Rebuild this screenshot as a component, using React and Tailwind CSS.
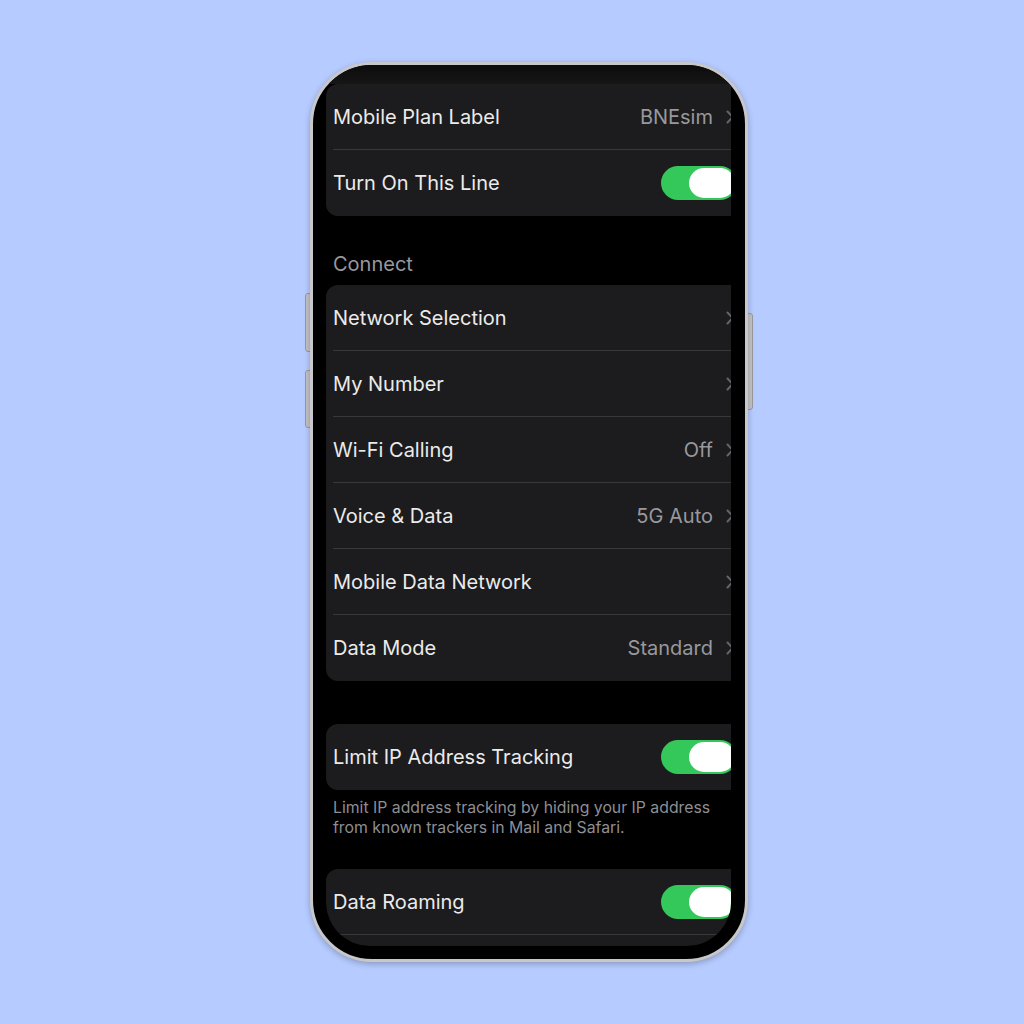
import React from 'react';

const font = { fontFamily: 'Inter, "Noto Sans", sans-serif' };

function Chevron() {
  return (
    <svg width="8" height="14" viewBox="0 0 8 14" className="shrink-0">
      <path d="M1.5 1.5 L6.5 7 L1.5 12.5" fill="none" stroke="#636368" strokeWidth="2" strokeLinecap="round" strokeLinejoin="round" />
    </svg>
  );
}

function Toggle() {
  return (
    <div className="flex h-[34px] w-[76px] items-center rounded-full bg-[#34c759]">
      <div className="ml-auto mr-[2px] h-[30px] w-[46px] rounded-full bg-white" />
    </div>
  );
}

function Row({ label, value, toggle, chevron, last }) {
  return (
    <div className="flex flex-col">
      <div className="flex h-[65px] items-center pl-[7px] pr-[17px]">
        <span className="text-[20px] text-[#ebebeb]">{label}</span>
        <div className="ml-auto flex items-center gap-[13px]">
          {value && <span className="text-[20px] text-[#98989d]">{value}</span>}
          {chevron && <Chevron />}
          {toggle && <div className="-mr-[3px]"><Toggle /></div>}
        </div>
      </div>
      {!last && <div className="ml-[7px] h-px bg-[#38383a]" />}
      {last && <div className="h-px" />}
    </div>
  );
}

function Card({ children, className = '' }) {
  return <div className={`w-[425px] rounded-l-[12px] bg-[#1c1c1e] ${className}`}>{children}</div>;
}

export default function App() {
  return (
    <div className="flex min-h-screen w-full items-start bg-[#b6cbff] pl-[310px] pt-[62px]" style={font}>
      <div className="relative">
        {/* side buttons */}
        <div className="absolute left-[-5px] top-[231px] h-[59px] w-[6px] rounded-l-[3px] bg-[#c3c3c6] border border-[#9a9a9e]" />
        <div className="absolute left-[-5px] top-[308px] h-[58px] w-[6px] rounded-l-[3px] bg-[#c3c3c6] border border-[#9a9a9e]" />
        <div className="absolute right-[-5px] top-[251px] h-[97px] w-[6px] rounded-r-[3px] bg-[#c3c3c6] border border-[#9a9a9e]" />

        <div className="relative h-[900px] w-[438px] overflow-hidden rounded-[62px] border-[3px] border-[#c8c8cb] bg-black shadow-[0_2px_6px_rgba(0,0,0,0.25)]">
          <div className="h-full pl-[13px] pr-[14px] pb-[13px]">
            <div className="h-full w-[405px] overflow-hidden rounded-bl-[44px] rounded-br-[44px]">
              <div className="h-[19px] w-full bg-gradient-to-b from-[#0c0c0c] to-[#161617]" />
              <Card>
                <Row label="Mobile Plan Label" value="BNEsim" chevron />
                <Row label="Turn On This Line" toggle last />
              </Card>

              <div className="flex h-[69px] items-end pb-[6px] pl-[7px]">
                <span className="text-[20px] text-[#98989d]">Connect</span>
              </div>

              <Card>
                <Row label="Network Selection" chevron />
                <Row label="My Number" chevron />
                <Row label="Wi-Fi Calling" value="Off" chevron />
                <Row label="Voice & Data" value="5G Auto" chevron />
                <Row label="Mobile Data Network" chevron />
                <Row label="Data Mode" value="Standard" chevron last />
              </Card>

              <div className="h-[43px]" />

              <Card>
                <Row label="Limit IP Address Tracking" toggle last />
              </Card>

              <div className="pl-[7px] pt-[8px] pb-[31px] text-[15.8px] leading-[20px] text-[#8e8e93]">
                <p>Limit IP address tracking by hiding your IP address</p>
                <p>from known trackers in Mail and Safari.</p>
              </div>

              <Card className="h-[200px]">
                <Row label="Data Roaming" toggle />
              </Card>
            </div>
          </div>
        </div>
      </div>
    </div>
  );
}
